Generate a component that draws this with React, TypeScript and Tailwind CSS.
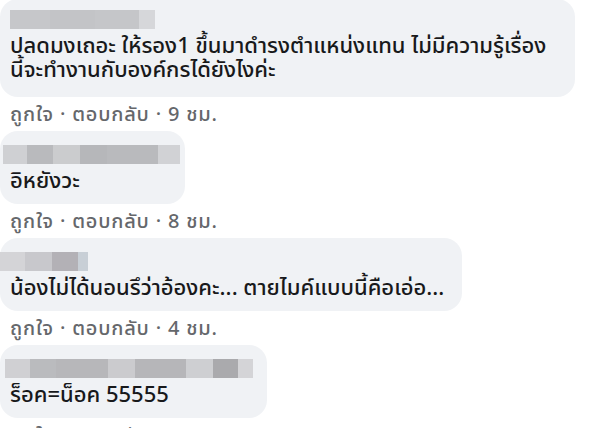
import React from 'react';

type Block = { w: number; c: string };

type Comment = {
  width: number;
  blurOffset: number;
  blur: Block[];
  lines: string[];
  time: string;
  first?: boolean;
};

const comments: Comment[] = [
  {
    width: 575,
    blurOffset: 10,
    blur: [
      { w: 40, c: '#c6c7ca' },
      { w: 45, c: '#c3c4c7' },
      { w: 44, c: '#c5c6c9' },
      { w: 16, c: '#d6d7da' },
    ],
    lines: [
      'ปลดมงเถอะ ให้รอง1 ขึ้นมาดำรงตำแหน่งแทน ไม่มีความรู้เรื่อง',
      'นี้จะทำงานกับองค์กรได้ยังไงค่ะ',
    ],
    time: '9 ชม.',
    first: true,
  },
  {
    width: 185,
    blurOffset: 3,
    blur: [
      { w: 24, c: '#cfd0d3' },
      { w: 26, c: '#b9babd' },
      { w: 27, c: '#cbccce' },
      { w: 27, c: '#b6b7ba' },
      { w: 51, c: '#b9babd' },
      { w: 22, c: '#d1d2d5' },
    ],
    lines: ['อิหยังวะ'],
    time: '8 ชม.',
  },
  {
    width: 462,
    blurOffset: 0,
    blur: [
      { w: 25, c: '#d4d4d7' },
      { w: 27, c: '#c8c8cc' },
      { w: 26, c: '#b3b1b6' },
      { w: 10, c: '#c8cfd6' },
    ],
    lines: ['น้องไม่ได้นอนรึว่าอ้องคะ... ตายไมค์แบบนี้คือเอ่อ...'],
    time: '4 ชม.',
  },
  {
    width: 267,
    blurOffset: 5,
    blur: [
      { w: 25, c: '#d0d0d3' },
      { w: 26, c: '#babbbe' },
      { w: 52, c: '#b7b7ba' },
      { w: 27, c: '#cbcbce' },
      { w: 51, c: '#b6b6b9' },
      { w: 27, c: '#cecfd2' },
      { w: 25, c: '#aaaaad' },
      { w: 15, c: '#d4d4d7' },
    ],
    lines: ['ร็อค=น็อค 55555'],
    time: '3 ชม.',
  },
];

const App: React.FC = () => {
  return (
    <div
      className="h-[428px] overflow-hidden bg-white"
      style={{ fontFamily: '"Noto Sans Thai", "Noto Sans Thai Looped", Tahoma, "Noto Sans", sans-serif' }}
    >
      <div className="-mt-[1px] flex flex-col">
        {comments.map((comment, index) => (
          <div key={index} className="flex flex-col">
            {/* bubble */}
            <div
              className={`rounded-[18px] bg-[#f0f2f5] ${comment.first ? 'pt-[11px] pb-[14px]' : 'pt-[14px] pb-[10px]'}`}
              style={{ width: comment.width }}
            >
              <div className="flex h-[19px]" style={{ marginLeft: comment.blurOffset }}>
                {comment.blur.map((b, idx) => (
                  <div key={idx} className="h-full" style={{ width: b.w, background: b.c }} />
                ))}
              </div>
              <div className="mt-[6px] pl-[10px] text-[22px] font-medium leading-[24px] text-[#18191b]">
                {comment.lines.map((line, idx) => (
                  <div key={idx} className="whitespace-nowrap">{line}</div>
                ))}
              </div>
            </div>
            {/* meta */}
            <div className="mt-[6px] mb-[4px] pl-[10px] text-[20px] font-medium leading-[24px] tracking-[0.8px] text-[#65676b]">
              ถูกใจ · ตอบกลับ · {comment.time}
            </div>
          </div>
        ))}
      </div>
    </div>
  );
};

export default App;
